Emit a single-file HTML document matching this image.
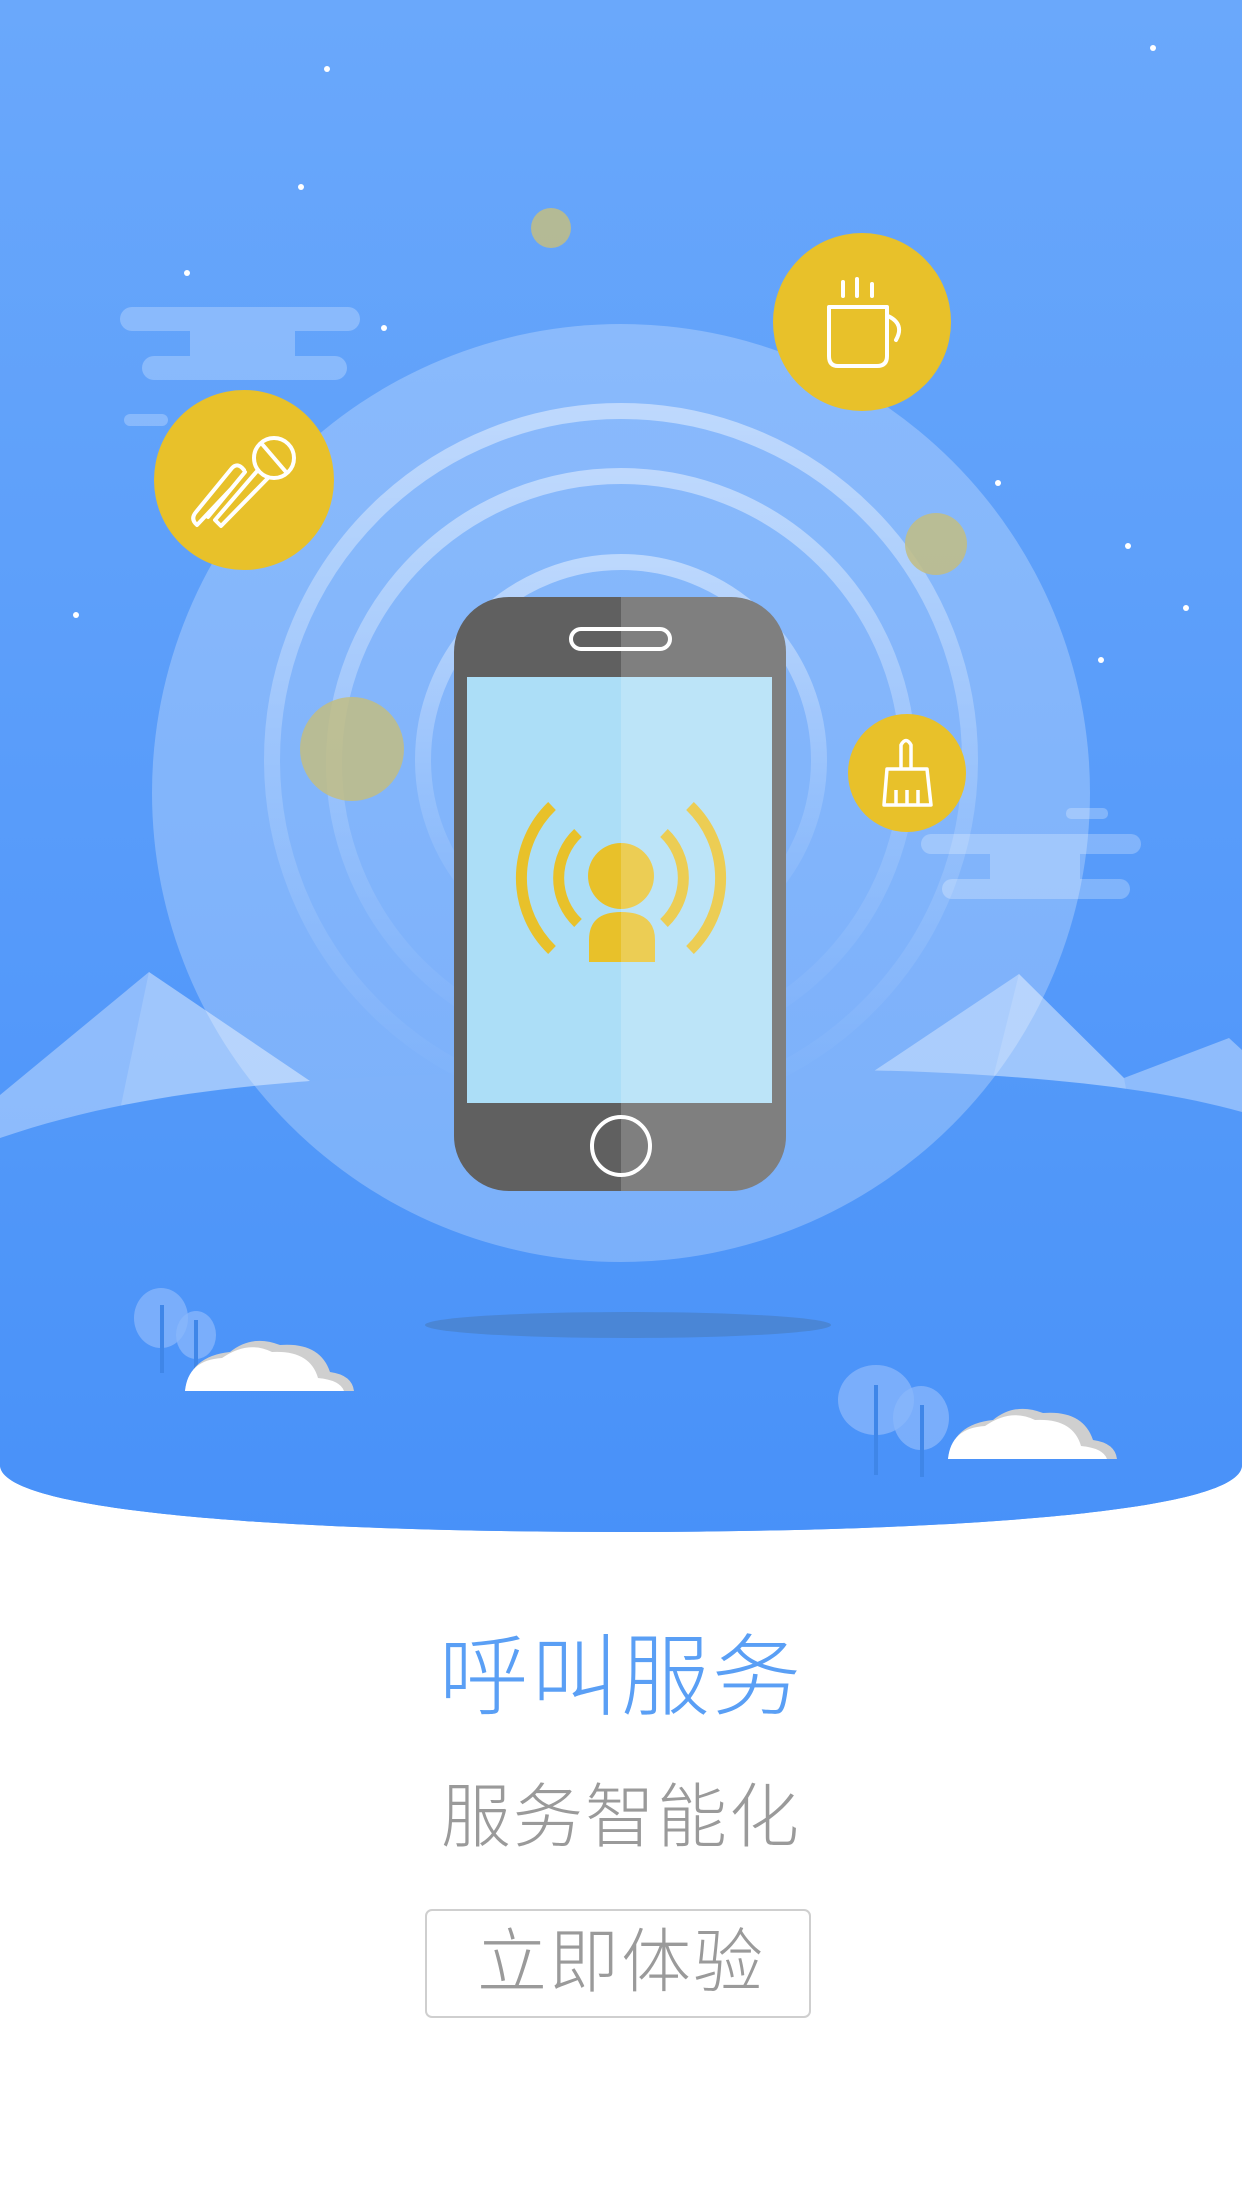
<!DOCTYPE html>
<html><head><meta charset="utf-8"><style>
html,body{margin:0;padding:0;background:#fff;}
body{width:1242px;height:2208px;position:relative;overflow:hidden;font-family:"Liberation Sans","Noto Sans CJK SC",sans-serif;}
svg{position:absolute;left:0;top:0;}
.t{position:absolute;left:0;width:1242px;text-align:center;line-height:1;}
</style></head><body>
<svg width="1242" height="2208" viewBox="0 0 1242 2208">
<defs>
<linearGradient id="bg" x1="0" y1="0" x2="0" y2="1"><stop offset="0" stop-color="#6aa8fb"/><stop offset="1" stop-color="#4891f9"/></linearGradient>
<linearGradient id="hill" x1="0" y1="0" x2="0" y2="1"><stop offset="0" stop-color="#5399f9"/><stop offset="1" stop-color="#4891f9"/></linearGradient>
<linearGradient id="ring" x1="0" y1="0" x2="0" y2="1"><stop offset="0" stop-color="#fff" stop-opacity="0.45"/><stop offset="0.6" stop-color="#fff" stop-opacity="0.15"/><stop offset="1" stop-color="#fff" stop-opacity="0"/></linearGradient>
<clipPath id="ph"><rect x="454" y="597" width="332" height="594" rx="55"/></clipPath>
<clipPath id="scene"><path d="M0 0H1242V1465C1242 1515 920 1532 621 1532C322 1532 0 1515 0 1465Z"/></clipPath>
</defs>
<g clip-path="url(#scene)">
<rect x="0" y="0" width="1242" height="1540" fill="url(#bg)"/>
<g fill="#fff">
<circle cx="327" cy="69" r="3"/><circle cx="301" cy="187" r="3"/><circle cx="187" cy="273" r="3"/><circle cx="384" cy="328" r="3"/><circle cx="76" cy="615" r="3"/><circle cx="1153" cy="48" r="3"/><circle cx="998" cy="483" r="3"/><circle cx="1128" cy="546" r="3"/><circle cx="1186" cy="608" r="3"/><circle cx="1101" cy="660" r="3"/>
</g>
<g fill="#fff" fill-opacity="0.25">
<rect x="120" y="307" width="240" height="24" rx="12"/>
<rect x="142" y="356" width="205" height="24" rx="12"/>
<rect x="190" y="331" width="105" height="25"/>
<rect x="124" y="414" width="44" height="12" rx="6"/>
<rect x="1066" y="808" width="42" height="11" rx="5"/>
<rect x="921" y="834" width="220" height="20" rx="10"/>
<rect x="942" y="879" width="188" height="20" rx="10"/>
<rect x="990" y="854" width="90" height="25"/>
</g>
<g fill="#fff" fill-opacity="0.35">
<polygon points="0,1095 149,972 310,1081 0,1140"/>
<polygon points="859,1081 1019,974 1124,1078 1229,1038 1242,1050 1242,1120 860,1120"/>
</g>
<g fill="#fff" fill-opacity="0.15">
<polygon points="149,972 120,1110 310,1081"/>
<polygon points="1019,974 1124,1078 1130,1110 990,1090"/>
</g>
<path d="M0 1138C170 1080 350 1075 621 1070C900 1065 1110 1075 1242 1112V1540H0Z" fill="url(#hill)"/>
<circle cx="621" cy="793" r="469" fill="#fff" fill-opacity="0.25"/>
<g fill="none" stroke="url(#ring)" stroke-width="16">
<circle cx="621" cy="760" r="349"/>
<circle cx="621" cy="763" r="287"/>
<circle cx="621" cy="760" r="198"/>
</g>
<g fill="#c2bd83" fill-opacity="0.85">
<circle cx="551" cy="228" r="20"/><circle cx="936" cy="544" r="31"/><circle cx="352" cy="749" r="52"/>
</g>
<g fill="#e8c12a">
<circle cx="244" cy="480" r="90"/><circle cx="862" cy="322" r="89"/><circle cx="907" cy="773" r="59"/>
</g>
<g fill="none" stroke="#fff" stroke-width="4" stroke-linecap="round" stroke-linejoin="round">
<circle cx="274" cy="458" r="20"/>
<line x1="262" y1="444" x2="286" y2="472"/>
<path d="M258 470L215 520L221 526L268 478"/>
<path d="M208 517L245 472M231 489L197 525Q190 519 196 512L232 468Q238 462 244 470"/>
</g>
<g fill="none" stroke="#fff" stroke-width="4" stroke-linecap="round" stroke-linejoin="round">
<path d="M829 307H887V356Q887 366 877 366H838Q829 366 829 356Z"/>
<path d="M888 316Q905 324 896 340"/>
<line x1="843" y1="282" x2="843" y2="296"/><line x1="857" y1="279" x2="857" y2="296"/><line x1="872" y1="284" x2="872" y2="296"/>
</g>
<g fill="none" stroke="#fff" stroke-width="3.5" stroke-linejoin="round">
<path d="M901 769V745Q906 736 911 745V769"/>
<path d="M887 769H927L931 805H884Z"/>
<path d="M896 790V805M907 790V805M918 790V805"/>
</g>
<g clip-path="url(#ph)">
<rect x="454" y="597" width="332" height="594" fill="#606060"/>
<rect x="467" y="677" width="305" height="426" fill="#acdef7"/>
<circle cx="621" cy="876" r="33" fill="#e8c12a"/>
<path d="M589 962V940Q589 912 621 912Q655 912 655 940V962Z" fill="#e8c12a"/>
<g fill="none" stroke="#e8c12a" stroke-width="11">
<path d="M552 806A100 100 0 0 0 552 950"/>
<path d="M690 806A100 100 0 0 1 690 950"/>
<path d="M578 833A62 62 0 0 0 578 923"/>
<path d="M664 833A62 62 0 0 1 664 923"/>
</g>
<rect x="621" y="597" width="165" height="594" fill="#fff" fill-opacity="0.2"/>
</g>
<rect x="571" y="629" width="99" height="20" rx="10" fill="none" stroke="#fff" stroke-width="4"/>
<circle cx="621" cy="1146" r="29" fill="none" stroke="#fff" stroke-width="4"/>
<ellipse cx="628" cy="1325" rx="203" ry="13" fill="#4a86d6"/>
<g fill="#8ab7fb" fill-opacity="0.75">
<ellipse cx="161" cy="1318" rx="27" ry="30"/><ellipse cx="196" cy="1335" rx="20" ry="24"/>
<ellipse cx="876" cy="1400" rx="38" ry="35"/><ellipse cx="921" cy="1418" rx="28" ry="32"/>
</g>
<g stroke="#3f86e8" stroke-width="4">
<line x1="162" y1="1305" x2="162" y2="1373"/><line x1="196" y1="1320" x2="196" y2="1375"/>
<line x1="876" y1="1385" x2="876" y2="1475"/><line x1="922" y1="1405" x2="922" y2="1477"/>
</g>
<path d="M185 1391Q190 1356 230 1352Q252 1334 280 1345Q320 1342 330 1372Q352 1375 354 1391Z" fill="#cfcfcf"/>
<path d="M185 1391Q188 1360 222 1358Q248 1340 272 1352Q310 1350 318 1378Q340 1380 344 1391Z" fill="#fff"/>
<path d="M948 1459Q953 1424 993 1420Q1015 1402 1043 1413Q1083 1410 1093 1440Q1115 1443 1117 1459Z" fill="#cfcfcf"/>
<path d="M948 1459Q951 1428 985 1426Q1011 1408 1035 1420Q1073 1418 1081 1446Q1103 1448 1107 1459Z" fill="#fff"/>
</g>
<rect x="426" y="1910" width="384" height="107" rx="6" fill="#fff" stroke="#cfcfcf" stroke-width="2"/>
</svg>
<div class="t" style="top:1633px;font-size:89px;color:#5a9ff5;letter-spacing:2px;font-weight:300;">呼叫服务</div>
<div class="t" style="top:1782px;font-size:70px;color:#9a9a9a;letter-spacing:2px;font-weight:300;">服务智能化</div>
<div class="t" style="top:1927px;font-size:70px;color:#9a9a9a;letter-spacing:2px;font-weight:300;">立即体验</div>
</body></html>
